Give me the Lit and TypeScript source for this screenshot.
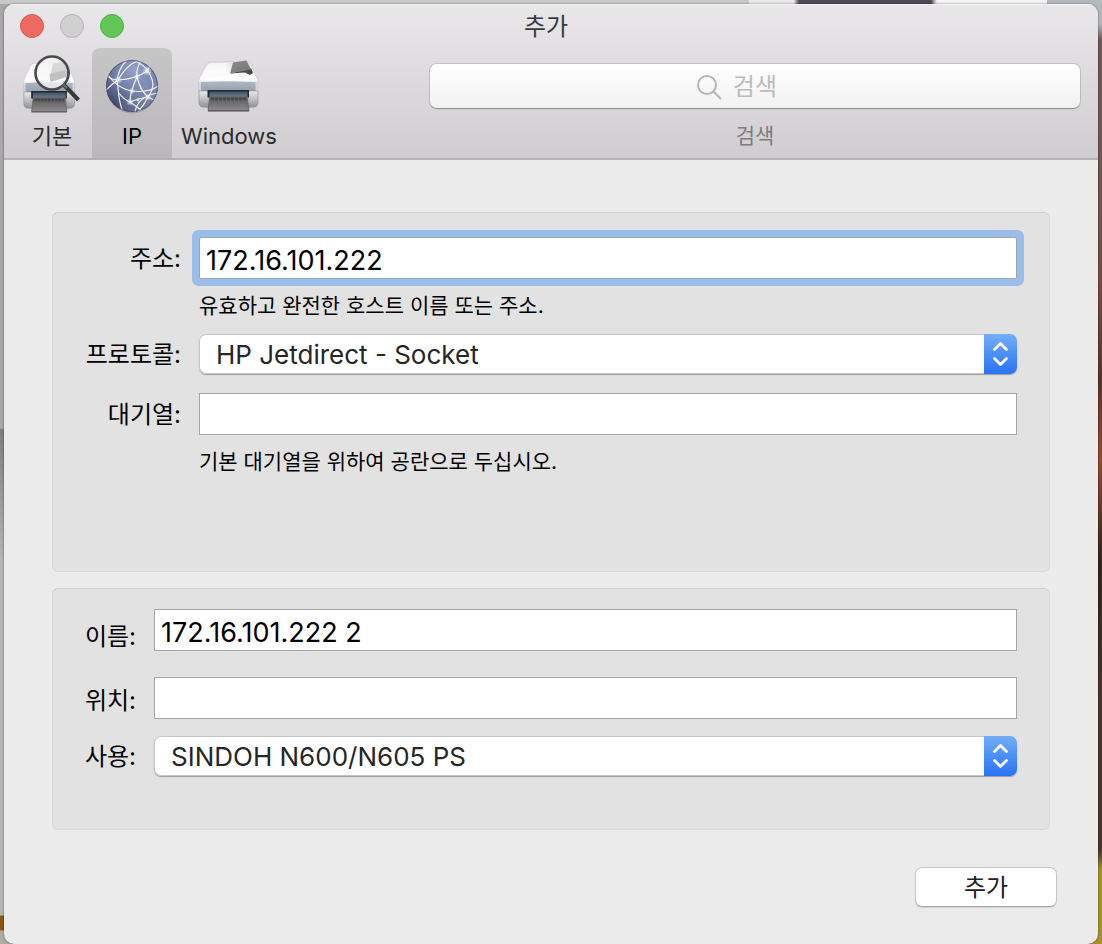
import { LitElement, html, css, svg } from "lit";
import { customElement, state } from "lit/decorators.js";

const printer = (id: string) => svg`
  <defs>
    <linearGradient id="${id}-top" x1="0" y1="0" x2="0" y2="1">
      <stop offset="0" stop-color="#e2e2e3"/><stop offset=".3" stop-color="#f4f4f4"/>
      <stop offset=".6" stop-color="#ffffff"/><stop offset="1" stop-color="#dcdcde"/>
    </linearGradient>
    <linearGradient id="${id}-side" x1="0" y1="0" x2="0" y2="1">
      <stop offset="0" stop-color="#ececed"/><stop offset="1" stop-color="#8f9092"/>
    </linearGradient>
    <linearGradient id="${id}-band" x1="0" y1="0" x2="0" y2="1">
      <stop offset="0" stop-color="#b0b8c4"/><stop offset="1" stop-color="#96a0ae"/>
    </linearGradient>
    <linearGradient id="${id}-slot" x1="0" y1="0" x2="0" y2="1">
      <stop offset="0" stop-color="#445062"/><stop offset="1" stop-color="#6d7c90"/>
    </linearGradient>
    <linearGradient id="${id}-tray" x1="0" y1="0" x2="0" y2="1">
      <stop offset="0" stop-color="#565558"/><stop offset="1" stop-color="#8d8b8e"/>
    </linearGradient>
    <linearGradient id="${id}-lid" x1="0" y1="0" x2="1" y2="1">
      <stop offset="0" stop-color="#8c8c8c"/><stop offset="1" stop-color="#747474"/>
    </linearGradient>
  </defs>
  <path d="M0.500 22 Q1 19 2 17 L8 5 Q10 2 14 2 L48 1 Q51 1 52 3 L58.500 17 Q60 20 60 23 L60 31 L0.500 31 Z" fill="url(#${id}-top)" stroke="#c4c4c6" stroke-width=".6"/>
  <path d="M10 5 Q11 3 14 3 L30 3 L27 14 Q16 13 5 17 Z" fill="#fff" opacity=".6"/>
  <path d="M32 13.500 L53 8 L55 13 L52 15 L47 12.500 Z" fill="#4a4a4a"/>
  <path d="M35 2.500 L48.500 .5 L53 9.500 L32 13.500 Z" fill="url(#${id}-lid)"/>
  <path d="M0.500 22 Q30 20.500 60 22 L60 31 L0.500 31 Z" fill="url(#${id}-band)"/>
  <path d="M0.500 21.500 L3 20 L3 31 L0.500 31 Z M57.500 20 L60 21.500 L60 31 L57.500 31 Z" fill="#e6e7ea" opacity=".7"/>
  <path d="M1 31 L11 31 L11 47.500 L4 47 Q1 46 1 43 Z" fill="url(#${id}-side)" stroke="#8b8b8e" stroke-width=".6"/>
  <path d="M50 31 L60 31 L60 43 Q60 46 57 47 L50 47.500 Z" fill="url(#${id}-side)" stroke="#8b8b8e" stroke-width=".6"/>
  <rect x="9.500" y="30" width="41.500" height="7.500" fill="#23272e"/>
  <rect x="11.500" y="31.500" width="38" height="5.500" fill="url(#${id}-slot)"/>
  <path d="M12 37 L49 37 L51 50.500 L10 50.500 Z" fill="url(#${id}-tray)" stroke="#606062" stroke-width=".8"/>
  <path d="M13 39 H48" stroke="#48474a" stroke-width="2.500" stroke-dasharray="3 1"/>
  <path d="M10 51 H51" stroke="#4b4b4d" stroke-width="1"/>`;

const basicIcon = html`<svg class="icon" viewBox="0 0 60 60" aria-hidden="true">
  <g transform="translate(1 5) scale(.86 1)">
    ${printer("pa")}
  </g>
  <circle cx="30" cy="17" r="16.500" fill="#f8f8f9" fill-opacity=".72"/>
  <path d="M27.500 18 L43 14 L45 21 L28.500 26 Z" fill="#c0c1c2"/>
  <circle cx="30" cy="17" r="16.500" fill="none" stroke="#4a4a4b" stroke-width="2.600"/>
  <path d="M42 29 L56.500 44" stroke="#39393a" stroke-width="4"/>
  <path d="M41 28 L45 32" stroke="#6a6a6b" stroke-width="2"/>
</svg>`;

const windowsIcon = html`<svg class="icon" viewBox="0 0 60 60" aria-hidden="true">
  <g transform="translate(-1 4)">${printer("pb")}</g>
</svg>`;

const nodes = [[12, 20, 3], [41, 11, 3.4], [31, 17, 2.2], [26, 31, 2.2], [24, 42, 2.6], [42, 37, 2.4], [32, 40, 1.6]];

const globeIcon = html`<svg class="icon" viewBox="0 0 60 60" aria-hidden="true">
  <defs>
    <radialGradient id="globe" cx=".55" cy=".2" r=".85">
      <stop offset="0" stop-color="#96a4cb"/><stop offset=".45" stop-color="#7280ab"/>
      <stop offset=".8" stop-color="#4b5478"/><stop offset="1" stop-color="#353b58"/>
    </radialGradient>
    <linearGradient id="glow" x1="0" y1="0" x2="1" y2="1">
      <stop offset=".5" stop-color="#b9c2de" stop-opacity="0"/><stop offset="1" stop-color="#a8b2d6" stop-opacity=".7"/>
    </linearGradient>
    <clipPath id="ball"><circle cx="26" cy="26" r="26"/></clipPath>
  </defs>
  <g transform="translate(4 4)">
    <ellipse cx="26" cy="28" rx="25.500" ry="25.500" fill="#000" opacity=".15"/>
    <circle cx="26" cy="26" r="26" fill="url(#globe)"/>
    <circle cx="26" cy="26" r="26" fill="url(#glow)"/>
    <g clip-path="url(#ball)" fill="none" stroke="#fff" stroke-width="1.200" opacity=".9">
      <path d="M1 16 Q6 20 12 20 Q30 19 41 11 Q43 8 44 5"/>
      <path d="M0 30 Q6 24 12 20 Q20 6 31 1"/>
      <path d="M21 0 Q9 12 12 27 Q13 43 17 52"/>
      <path d="M2 15 Q14 32 34 31.500 Q46 31 52 26"/>
      <path d="M35 1 Q30 8 31 17 Q24 32 24 42"/>
      <path d="M31 2 Q42 7 45 17 Q50 26 42 37 Q38 45 32 52"/>
      <path d="M31 17 Q34 30 42 37 Q47 40 50 40"/>
      <path d="M13 33 Q17 39 24 42 Q30 46 36 51"/>
      <path d="M29 52 Q32 36 52 33"/>
      <path d="M24 42 Q33 38 42 37"/>
    </g>
    <g fill="#e9f0ff">
      ${nodes.map(([x, y, r]) => svg`<circle cx=${x} cy=${y} r=${r * 1.2} opacity=".35"/><circle cx=${x} cy=${y} r=${r * 0.6}/>`)}
    </g>
    <circle cx="26" cy="26" r="25.500" fill="none" stroke="#3e4463" stroke-opacity=".6"/>
  </g>
</svg>`;

@customElement("pop-up")
export class PopUp extends LitElement {
  static properties = { label: {}, options: { attribute: false } };
  declare label: string;
  declare options: string[];

  static styles = css`
    :host { display: block; min-width: 0; }
    .box {
      display: grid; height: 40px; overflow: hidden;
      border-radius: 7px; background: #fff;
      box-shadow: 0 1px 1px #9c9c9c, inset 0 0 0 1px #c4c4c4;
    }
    select, .cap { grid-area: 1 / 1; }
    select {
      appearance: none; width: 100%; min-width: 0; height: 40px; margin: 0; border: 0;
      padding: 1px 40px 0 17px; background: transparent; color: #262626; outline: none;
      font-family: Inter, "Noto Sans CJK KR", sans-serif; font-size: 26px;
    }
    .cap {
      justify-self: end; width: 33px; height: 40px; pointer-events: none;
      background: linear-gradient(#74aef5, #4a90f5 50%, #2a72f6);
    }
    svg { display: block; width: 33px; height: 40px; }
  `;

  render() {
    return html`<div class="box">
      <select aria-label=${this.label}>
        ${this.options.map((o) => html`<option>${o}</option>`)}
      </select>
      <span class="cap"><svg viewBox="0 0 33 40" fill="none" stroke="#fff" stroke-width="2.800" stroke-linecap="round" stroke-linejoin="round">
        <path d="M10.500 15.500 L16.500 9.500 L22.500 15.500 M10.500 24.500 L16.500 30.500 L22.500 24.500"/>
      </svg></span>
    </div>`;
  }
}

@customElement("app-root")
export class AppRoot extends LitElement {
  @state() private tab = "IP";

  static styles = css`
    :host {
      display: flex; box-sizing: border-box; min-height: 100vh; padding: 4px 4px 0;
      font-family: Inter, "Noto Sans CJK KR", sans-serif; color: #000;
      background:
        linear-gradient(90deg, #c9c9c9 68%, #e9e9e9 68% 72%, #4f4a58 72.500% 84.500%, #f4f4f4 85% 95%, #b4b8bf 95%) top / 100% 4px no-repeat,
        linear-gradient(#a8a8a8 428px, #7e7e7e 430px, #b4b4b2 560px 915px, #8a5716 916px 930px, #b0aca4 931px) left / 50% 100% no-repeat,
        linear-gradient(#b4b8bd 24px, #6f5853 40px 150px, #7d4a40 280px, #5f3028 380px, #9a4a2c 460px, #33231c 560px, #4a3527 700px 850px, #a88f2f 870px) right / 50% 100% no-repeat;
    }
    * { box-sizing: border-box; }
    .window {
      flex: 1; display: flex; flex-direction: column; min-width: 0; overflow: hidden;
      border-radius: 10px; background: #ebebeb;
      box-shadow: 0 0 2px rgba(0, 0, 0, .6);
    }
    .bar {
      background: linear-gradient(#e9e7e9, #d0cdd0);
      border-bottom: 2px solid #b3b0b3;
      box-shadow: inset 0 1px 0 #f6f5f6;
    }
    .title {
      display: grid; grid-template-columns: 104px 1fr 130px; align-items: center;
      height: 44px; padding-left: 16px;
    }
    .lights { display: flex; gap: 16px; }
    .light {
      width: 24px; height: 24px; padding: 0; border-radius: 50%;
      border: 1px solid #d85a50; background: #ee6a60;
    }
    .light.min { border-color: #b4b2b4; background: #d1d0d1; }
    .light.max { border-color: #4fae45; background: #61c656; }
    h1 { margin: 0; padding-top: 2px; text-align: center; font-size: 24px; line-height: 32px; font-weight: 400; color: #3b393b; }
    .tools { display: flex; height: 110px; padding: 0 18px 0 8px; }
    .tool {
      display: flex; flex-direction: column; align-items: center; justify-content: space-between;
      flex: none; min-width: 80px; padding: 8px 9px; border: 0; border-radius: 8px 8px 0 0;
      background: none; color: #2b2b2b; font-family: inherit; font-size: 22px; line-height: 28px;
    }
    .tool.on { background: #bdbbbd linear-gradient(#c7c6c7, #bab8ba); color: #000; }
    .icon { display: block; width: 60px; height: 60px; overflow: visible; }
    .search { flex: 1; display: flex; flex-direction: column; justify-content: space-between; margin-left: 144px; padding: 16px 0 8px; }
    .find { display: grid; align-items: center; }
    .find input, .find svg { grid-area: 1 / 1; }
    .find input {
      width: 100%; height: 44px; padding: 0; border: 0; border-radius: 7px; outline: none;
      background: linear-gradient(#fff, #f1f1f1); text-align: center;
      box-shadow: 0 1px 1px #8f8d8f, 0 0 0 1px #c3c1c3;
      font-family: inherit; font-size: 24px; color: #333;
    }
    .find input::placeholder { color: #bcbcbc; opacity: 1; }
    .find svg { justify-self: center; width: 26px; height: 28px; margin-right: 92px; pointer-events: none; }
    .search label { text-align: center; font-size: 21px; line-height: 28px; color: #7e7c7e; }

    form { flex: 1; display: flex; flex-direction: column; padding: 52px 48px 37px; }
    .panel {
      display: grid; align-items: center; column-gap: 18px; padding-right: 32px;
      border: 1px solid #d9d9d9; border-top-color: #cfcfcf; border-radius: 6px; background: #e2e2e2;
    }
    .connection { grid-template-columns: 128px minmax(0, 1fr); padding-top: 24px; padding-bottom: 81px; }
    .identity {
      grid-template-columns: 83px minmax(0, 1fr); grid-template-rows: 54px 45px 40px; row-gap: 14px;
      margin-top: 16px; padding-top: 20px; padding-bottom: 53px;
    }
    .panel label { padding-top: 2px; text-align: right; font-size: 24px; line-height: 32px; white-space: nowrap; }
    .field {
      width: 100%; height: 42px; padding: 5px 6px 0; border: 1px solid #a6a6a6; border-radius: 0;
      background: #fff; color: #000; font-family: inherit; font-size: 27px; outline: none;
    }
    .field.active { border-color: #9aa5b5; border-radius: 2px; box-shadow: 0 0 0 7px #9bbde9; }
    .hint { grid-column: 2; margin: 0; padding-bottom: 2px; font-size: 21px; line-height: 53px; white-space: nowrap; }
    .gap-large { margin-top: 19px; }
    .identity .field { align-self: start; }
    .footer { display: flex; justify-content: flex-end; margin-top: 37px; margin-right: -7px; }
    .add {
      width: 142px; height: 40px; padding: 2px 0 0; border: 1px solid #c6c6c6; border-bottom-color: #a9a9a9;
      border-radius: 7px; background: #fff; color: #222; font-family: inherit; font-size: 24px; line-height: 36px;
      box-shadow: 0 1px 1px #cfcfcf;
    }
  `;

  private tool(name: string, icon: unknown) {
    return html`<button type="button" class="tool ${this.tab === name ? "on" : ""}" aria-pressed=${this.tab === name}
      @click=${() => (this.tab = name)}>${icon}<span>${name}</span></button>`;
  }

  render() {
    return html`<main class="window">
      <header class="bar">
        <div class="title">
          <div class="lights">
            <button class="light" aria-label="닫기"></button>
            <button class="light min" aria-label="최소화" disabled></button>
            <button class="light max" aria-label="확대"></button>
          </div>
          <h1>추가</h1>
        </div>
        <div class="tools">
          ${this.tool("기본", basicIcon)} ${this.tool("IP", globeIcon)} ${this.tool("Windows", windowsIcon)}
          <div class="search">
            <div class="find">
              <input id="search" type="text" placeholder="검색">
              <svg viewBox="0 0 26 28" fill="none" stroke="#b5b5b5" stroke-width="2" aria-hidden="true">
                <circle cx="11" cy="13" r="9"/><path d="M17.500 19.500 L25 27"/>
              </svg>
            </div>
            <label for="search">검색</label>
          </div>
        </div>
      </header>
      <form @submit=${(e: Event) => e.preventDefault()}>
        <section class="panel connection">
          <label for="address">주소:</label>
          <input id="address" class="field active" type="text" value="172.16.101.222">
          <p class="hint">유효하고 완전한 호스트 이름 또는 주소.</p>
          <label for="protocol">프로토콜:</label>
          <pop-up id="protocol" label="프로토콜" .options=${["HP Jetdirect - Socket"]}></pop-up>
          <label class="gap-large" for="queue">대기열:</label>
          <input id="queue" class="field gap-large" type="text">
          <p class="hint">기본 대기열을 위하여 공란으로 두십시오.</p>
        </section>
        <section class="panel identity">
          <label for="name">이름:</label>
          <input id="name" class="field" type="text" value="172.16.101.222 2">
          <label for="place">위치:</label>
          <input id="place" class="field" type="text">
          <label for="use">사용:</label>
          <pop-up id="use" label="사용" .options=${["SINDOH N600/N605 PS"]}></pop-up>
        </section>
        <div class="footer"><button class="add" type="submit">추가</button></div>
      </form>
    </main>`;
  }
}
